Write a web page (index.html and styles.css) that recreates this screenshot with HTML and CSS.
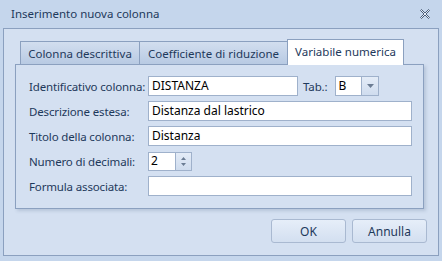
FILE: index.html
```html
<!DOCTYPE html>
<html lang="it">
<head>
    <meta charset="UTF-8">
    <title>Inserimento nuova colonna</title>
    <link rel="stylesheet" href="styles.css">
</head>
<body>
    <div class="window">
        <div class="titlebar">
            <span class="title">Inserimento nuova colonna</span>
            <svg class="close" width="10" height="10" viewBox="0 0 10 10">
                <path d="M0.5 1.5 L1.5 0.5 L5 4 L8.5 0.5 L9.5 1.5 L6 5 L9.5 8.5 L8.5 9.5 L5 6 L1.5 9.5 L0.5 8.5 L4 5 Z" fill="#e8eef7" stroke="#3b4f6b" stroke-width="0.9"/>
            </svg>
        </div>
        <div class="frame">
            <div class="tabs">
                <div class="tab tab-1">Colonna descrittiva</div>
                <div class="tab tab-2">Coefficiente di riduzione</div>
                <div class="tab tab-active">Variabile numerica</div>
            </div>
            <div class="panel">
                <div class="row">
                    <label>Identificativo colonna:</label>
                    <div class="field field-id">DISTANZA</div>
                    <label class="tab-label">Tab.:</label>
                    <div class="combo">
                        <span class="combo-value">B</span>
                        <span class="combo-btn"><svg width="7" height="4" viewBox="0 0 7 4"><path d="M0 0 H7 L3.5 4 Z" fill="#6b7c93"/></svg></span>
                    </div>
                </div>
                <div class="row">
                    <label>Descrizione estesa:</label>
                    <div class="field field-wide">Distanza dal lastrico</div>
                </div>
                <div class="row">
                    <label>Titolo della colonna:</label>
                    <div class="field field-wide">Distanza</div>
                </div>
                <div class="row">
                    <label>Numero di decimali:</label>
                    <div class="spinner">
                        <span class="spin-value">2</span>
                        <span class="spin-btn">
                            <svg width="7" height="11" viewBox="0 0 7 11"><path d="M3.5 1 L6 4 H1 Z M1 7 H6 L3.5 10 Z" fill="#6b7c93"/></svg>
                        </span>
                    </div>
                </div>
                <div class="row">
                    <label>Formula associata:</label>
                    <div class="field field-wide"></div>
                </div>
            </div>
            <div class="buttons">
                <button>OK</button>
                <button>Annulla</button>
            </div>
        </div>
    </div>
</body>
</html>
```

FILE: styles.css
```css
* { box-sizing: border-box; }
body {
    margin: 0;
    font-family: "Noto Sans", "Open Sans", sans-serif;
    font-size: 11.5px;
    background: #c5d6ec;
    color: #1e395b;
}
.window { width: 442px; height: 261px; background: #c5d6ec; }
.titlebar {
    height: 28px;
    display: flex;
    align-items: center;
    justify-content: space-between;
    padding: 0 12px 2px 11px;
    color: #1e395b;
}
.close { margin-top: 1px; }
.frame {
    margin: 0 3px;
    height: 228px;
    border: 1px solid #8ba0bf;
    background: #d4e0f1;
}
.tabs {
    display: flex;
    align-items: flex-end;
    height: 25px;
    margin: 10px 0 0 16px;
    position: relative;
    z-index: 1;
}
.tab {
    height: 23px;
    border: 1px solid #8ba0bf;
    border-bottom: none;
    background: linear-gradient(#d2deef, #b8cae3);
    display: flex;
    align-items: center;
    justify-content: center;
    white-space: nowrap;
}
.tab-1 { width: 120px; }
.tab-2 { width: 149px; margin-left: -1px; }
.tab-active {
    width: 117px;
    height: 26px;
    margin-left: -1px;
    margin-bottom: -1px;
    background: #ffffff;
    padding-bottom: 3px;
}
.panel {
    margin-left: 11px;
    width: 409px;
    height: 145px;
    border: 1px solid #8ba0bf;
    box-shadow: 2px 2px 3px rgba(100, 120, 150, 0.25);
    padding: 11px 0 0 13px;
    display: flex;
    flex-direction: column;
    gap: 5px;
}
.row { display: flex; align-items: center; height: 20px; }
.row label { width: 119px; flex-shrink: 0; white-space: nowrap; letter-spacing: -0.15px; }
.field {
    height: 20px;
    background: #ffffff;
    border: 1px solid #9fb1cb;
    color: #000000;
    padding: 0 3px;
    line-height: 17px;
    font-size: 12px;
}
.field-id { width: 150px; }
.field-wide { width: 264px; }
.row .tab-label { width: auto; margin: 0 8px 0 5px; }
.combo {
    display: flex;
    height: 20px;
    width: 44px;
    border: 1px solid #9fb1cb;
    color: #000000;
    font-size: 12px;
}
.combo-value { flex: 1; background: #ffffff; padding-left: 2px; line-height: 17px; }
.combo-btn {
    width: 17px;
    border-left: 1px solid #9fb1cb;
    background: linear-gradient(#e4ecf7, #cfdcee);
    display: flex;
    align-items: center;
    justify-content: center;
}
.spinner {
    display: flex;
    height: 19px;
    width: 44px;
    border: 1px solid #9fb1cb;
    color: #000000;
    font-size: 12px;
}
.spin-value { width: 26px; background: #ffffff; padding-left: 2px; line-height: 16px; }
.spin-btn {
    flex: 1;
    border-left: 1px solid #9fb1cb;
    background: linear-gradient(#e4ecf7, #cfdcee);
    display: flex;
    align-items: center;
    justify-content: center;
}
.buttons {
    display: flex;
    justify-content: flex-end;
    gap: 6px;
    margin-top: 10px;
    padding-right: 11px;
}
button {
    width: 75px;
    height: 24px;
    border: 1px solid #a9b9d1;
    border-radius: 3px;
    background: linear-gradient(#e6eef9, #d3dff0);
    font-family: inherit;
    font-size: 12px;
    color: #1e395b;
}
```
